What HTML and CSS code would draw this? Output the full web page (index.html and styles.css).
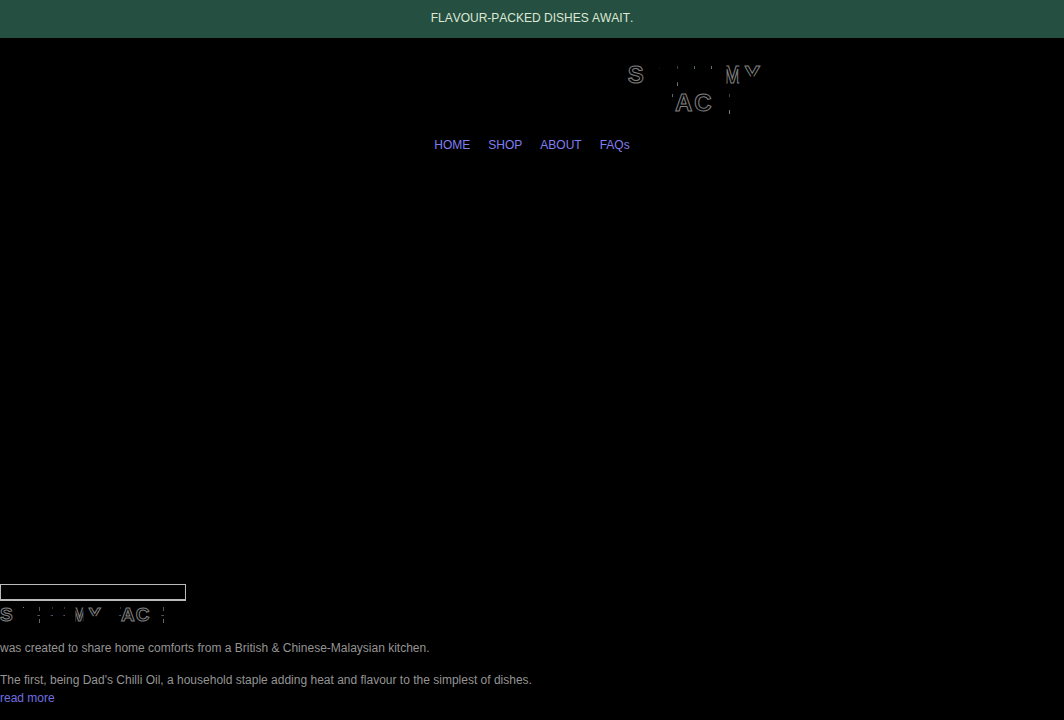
FILE: index.html
```html
<!DOCTYPE html>
<html lang="en">
<head>
  <meta charset="utf-8">
  <meta name="viewport" content="width=device-width, initial-scale=1">
  <title>Steff My Face</title>
  <link rel="stylesheet" href="styles.css">
</head>
<body>
  <div class="announcement">FLAVOUR-PACKED DISHES AWAIT.</div>

  <header class="header">
    <h1 class="brand brand-large"><span>S</span><span class="t">T</span><span class="e">E</span><span class="f">F</span><span class="f">F</span> <span class="m">M</span><span class="y">Y</span><br><span class="f">F</span><span>A</span><span>C</span><span class="e">E</span></h1>
    <nav class="nav">
      <a href="#">HOME</a>
      <a href="#">SHOP</a>
      <a href="#">ABOUT</a>
      <a href="#">FAQs</a>
    </nav>
  </header>

  <main>
    <section class="hero"></section>
    <section class="intro">
      <input class="search" type="text" aria-label="Search">
      <h2 class="brand brand-small"><span>S</span><span class="t">T</span><span class="e">E</span><span class="f">F</span><span class="f">F</span> <span class="m">M</span><span class="y">Y</span> <span class="f">F</span><span>A</span><span>C</span><span class="e">E</span></h2>
      <p>was created to share home comforts from a British &amp; Chinese-Malaysian kitchen.</p>
      <p>The first, being Dad's Chilli Oil, a household staple adding heat and flavour to the simplest of dishes.<br>
      <a href="#">read more</a></p>
    </section>
  </main>
</body>
</html>
```

FILE: styles.css
```css
* { box-sizing: border-box; }

body {
  margin: 0;
  background: #000;
  color: #949494;
  font-family: "Liberation Sans", Arial, sans-serif;
  font-size: 12px;
  line-height: 18px;
}

a { color: #716ee0; text-decoration: none; }

.announcement {
  padding: 9px 10px 11px;
  background: #254f40;
  color: #dce8d5;
  text-align: center;
  font-kerning: none;
}

.header { padding-top: 23px; }

/* outlined lettering, the straight letters show only their tips */
.brand {
  margin: 0;
  color: #000;
  font-weight: bold;
  font-kerning: none;
  -webkit-text-stroke: 1px #808080;
}
.brand span { display: inline-block; }
.brand .t, .brand .e, .brand .f {
  -webkit-text-stroke: 0;
  background-repeat: no-repeat;
}
.brand .t, .brand .f {
  background-image: linear-gradient(#777, #777);
  background-size: 1px 3px;
  background-position: calc(100% - 2px) 20%;
}
.brand .e {
  background-image: linear-gradient(#444, #444), linear-gradient(#777, #777);
  background-size: 1px 3px, 1px 4px;
  background-position: calc(100% - 2px) 20%, calc(100% - 2px) 86%;
}
.brand .m { clip-path: inset(0 5px 0 4px); }
.brand .y { clip-path: inset(0 0 45% 0); }

.brand-large {
  padding-left: 326px;
  font-size: 24px;
  line-height: 28px;
  letter-spacing: 2px;
  text-align: center;
}

.brand-small {
  font-size: 19px;
  line-height: 24px;
  letter-spacing: 1px;
}
.brand-small .f, .brand-small .e {
  background-image: linear-gradient(#555, #555), linear-gradient(#333, #333);
  background-size: 6px 1px, 1px 2px;
  background-position: right 50%, right 20%;
}
.brand-small .e {
  background-image: linear-gradient(#555, #555), linear-gradient(#555, #555), linear-gradient(#666, #666);
  background-size: 6px 1px, 1px 4px, 1px 4px;
  background-position: right 50%, right 20%, right 80%;
}

.nav {
  display: flex;
  justify-content: center;
  gap: 18px;
  padding-top: 19px;
}
.nav a { color: #817ef0; }

.hero { height: 430px; }

.search {
  display: block;
  width: 186px;
  height: 17px;
  padding: 0 4px;
  border: 1px solid #bbb;
  border-bottom-width: 2px;
  background: #000;
  color: #bbb;
}

.intro p { margin: 0 0 14px; }
.intro .brand { margin: 2px 0 12px; }
```
